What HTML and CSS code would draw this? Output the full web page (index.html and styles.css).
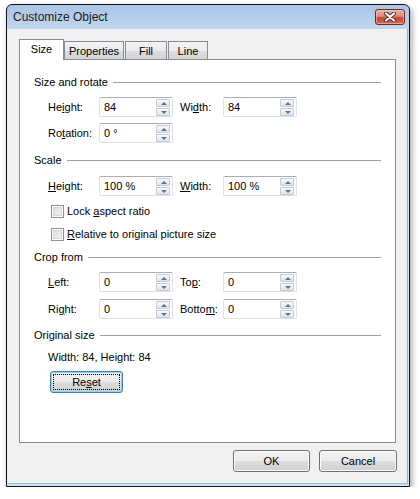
FILE: index.html
```html
<!DOCTYPE html>
<html>
<head>
<meta charset="utf-8">
<link rel="stylesheet" href="styles.css">
</head>
<body>
<div class="window">
  <div class="titlebar">
    <span class="title">Customize Object</span>
    <div class="close">
      <svg width="14" height="10" viewBox="0 0 14 10">
        <path d="M3 1.5 L11 8.5 M11 1.5 L3 8.5" stroke="#5a2a24" stroke-width="4" stroke-linecap="round"/>
        <path d="M3 1.5 L11 8.5 M11 1.5 L3 8.5" stroke="#ffffff" stroke-width="2.2" stroke-linecap="round"/>
      </svg>
    </div>
  </div>
  <div class="client">
    <div class="tabs">
      <div class="tab active t-size">Size</div>
      <div class="tab t-props">Properties</div>
      <div class="tab t-fill">Fill</div>
      <div class="tab t-line">Line</div>
    </div>
    <div class="panel">
      <div class="group g1"><span>Size and rotate</span><i class="rule"></i></div>
      <div class="row r-first">
        <span class="lbl">He<u>i</u>ght:</span>
        <div class="spin"><span class="val">84</span><div class="btns"><b class="up"></b><b class="dn"></b></div></div>
        <span class="lbl lbl2">Wi<u>d</u>th:</span>
        <div class="spin"><span class="val">84</span><div class="btns"><b class="up"></b><b class="dn"></b></div></div>
      </div>
      <div class="row r-next">
        <span class="lbl">Ro<u>t</u>ation:</span>
        <div class="spin"><span class="val">0 °</span><div class="btns"><b class="up"></b><b class="dn"></b></div></div>
      </div>

      <div class="group g2"><span>Scale</span><i class="rule"></i></div>
      <div class="row r-scale">
        <span class="lbl"><u>H</u>eight:</span>
        <div class="spin"><span class="val">100 %</span><div class="btns"><b class="up"></b><b class="dn"></b></div></div>
        <span class="lbl lbl2"><u>W</u>idth:</span>
        <div class="spin"><span class="val">100 %</span><div class="btns"><b class="up"></b><b class="dn"></b></div></div>
      </div>
      <div class="check c1"><span class="box"></span><span>Lock <u>a</u>spect ratio</span></div>
      <div class="check c2"><span class="box"></span><span><u>R</u>elative to original picture size</span></div>

      <div class="group g3"><span>Crop from</span><i class="rule"></i></div>
      <div class="row r-crop">
        <span class="lbl"><u>L</u>eft:</span>
        <div class="spin"><span class="val">0</span><div class="btns"><b class="up"></b><b class="dn"></b></div></div>
        <span class="lbl lbl2">To<u>p</u>:</span>
        <div class="spin"><span class="val">0</span><div class="btns"><b class="up"></b><b class="dn"></b></div></div>
      </div>
      <div class="row r-next2">
        <span class="lbl">Ri<u>g</u>ht:</span>
        <div class="spin"><span class="val">0</span><div class="btns"><b class="up"></b><b class="dn"></b></div></div>
        <span class="lbl lbl2">Botto<u>m</u>:</span>
        <div class="spin"><span class="val">0</span><div class="btns"><b class="up"></b><b class="dn"></b></div></div>
      </div>

      <div class="group g4"><span>Original size</span><i class="rule"></i></div>
      <div class="orig">Width: 84, Height: 84</div>
      <div class="reset-wrap"><div class="btn reset"><span class="focus">Re<u>s</u>et</span></div></div>
    </div>
    <div class="footer">
      <div class="btn ok">OK</div>
      <div class="btn cancel">Cancel</div>
    </div>
  </div>
</div>
</body>
</html>
```

FILE: styles.css
```css
html, body {
  margin: 0;
  padding: 0;
  background: #ffffff;
}
body {
  font-family: "Liberation Sans", Arial, sans-serif;
  font-size: 11px;
  color: #000;
}
u { text-decoration: underline; text-underline-offset: 1px; }

.window {
  box-sizing: border-box;
  margin: 4px 0 0 6px;
  width: 404px;
  height: 483px;
  border: 1px solid #151515;
  border-radius: 6px 6px 0 0;
  background: linear-gradient(#a9c4e6 0px, #c4d8ef 26px, #d7e6f5 60px, #cfe1f3 100%);
  box-shadow: 2px 3px 6px rgba(0,0,0,0.35);
  padding: 0 1px 2px 0;
  display: flex;
  flex-direction: column;
}
.titlebar {
  height: 24px;
  display: flex;
  align-items: flex-start;
  justify-content: space-between;
  padding: 0 3px 0 6px;
  flex: none;
}
.title {
  font-size: 12px;
  line-height: 24px;
  color: #1b1b1b;
}
.close {
  margin-top: 4px;
  width: 28px;
  height: 14px;
  border: 1px solid #6b2720;
  border-radius: 3px;
  background: linear-gradient(#e6b0a4 0%, #d98878 45%, #c54634 55%, #cf6a55 100%);
  box-shadow: inset 0 0 0 1px rgba(255,220,210,0.5);
  display: flex;
  align-items: center;
  justify-content: center;
}
.close svg { display: block; }

.client {
  flex: 1;
  background: #f0f0f0;
  border-left: 1px solid #e4edf7;
  border-right: 1px solid #6cc0ea;
  border-bottom: 1px solid #82c6ec;
  padding: 10px 11px 0 11px;
  display: flex;
  flex-direction: column;
}

.tabs {
  display: flex;
  align-items: flex-end;
  height: 21px;
  margin-bottom: -1px;
}
.tab {
  box-sizing: border-box;
  height: 19px;
  border: 1px solid #898c95;
  border-bottom: none;
  background: linear-gradient(#f3f3f3 0%, #ebebeb 50%, #dcdcdc 51%, #d2d2d2 100%);
  text-align: center;
  line-height: 18px;
  font-size: 11px;
}
.tab.active {
  height: 21px;
  background: #ffffff;
  position: relative;
  z-index: 1;
  line-height: 18px;
}
.t-size { width: 45px; margin-right: 0; }
.t-props { width: 60px; margin-left: 0; }
.t-fill { width: 42px; margin-left: 1px; }
.t-line { width: 40px; margin-left: 1px; }

.panel {
  box-sizing: border-box;
  width: 377px;
  height: 384px;
  border: 1px solid #898c95;
  background: #ffffff;
  padding: 0 14px 0 14px;
}

.group {
  display: flex;
  align-items: center;
  height: 16px;
}
.group .rule {
  flex: 1;
  height: 0;
  border-top: 1px solid #a0a0a0;
  margin-left: 5px;
}
.g1 { margin-top: 14px; }
.g2 { margin-top: 9px; }
.g3 { margin-top: 7px; }
.g4 { margin-top: 8px; }

.row {
  display: flex;
  align-items: center;
  height: 20px;
  padding-left: 14px;
}
.r-first { margin-top: 7px; }
.r-next { margin-top: 6px; }
.r-scale { margin-top: 8px; }
.r-crop { margin-top: 7px; }
.r-next2 { margin-top: 7px; }

.lbl { width: 51px; flex: none; }
.lbl2 { width: 43px; margin-left: 7px; }

.spin {
  box-sizing: border-box;
  width: 74px;
  height: 20px;
  border: 1px solid #dde2e8;
  border-top-color: #abadb3;
  border-radius: 2px;
  display: flex;
  align-items: center;
  justify-content: space-between;
  padding: 0 2px 0 4px;
}
.val { line-height: 18px; }
.btns {
  display: flex;
  flex-direction: column;
  gap: 1px;
}
.btns b {
  box-sizing: border-box;
  width: 14px;
  height: 8px;
  border: 1px solid #c4cbd4;
  border-radius: 1px;
  background: linear-gradient(#f9f9f9, #e1e4e8);
  position: relative;
}
.btns b::after {
  content: "";
  position: absolute;
  left: 4px;
  top: 2px;
  border-left: 3px solid transparent;
  border-right: 3px solid transparent;
}
.btns b.up::after { border-bottom: 3px solid #5673a8; }
.btns b.dn::after { border-top: 3px solid #5673a8; }

.check {
  display: flex;
  align-items: center;
  height: 16px;
  padding-left: 17px;
  gap: 3px;
}
.c1 { margin-top: 7px; }
.c2 { margin-top: 7px; }
.box {
  box-sizing: border-box;
  width: 13px;
  height: 13px;
  border: 1px solid #8e8f8f;
  background: #f4f4f4;
  box-shadow: inset 0 0 0 1px #ffffff, inset 0 0 0 2px #d6d6d6;
  background: linear-gradient(135deg, #d9d9d9, #f6f6f6);
}

.orig {
  margin-top: 6px;
  height: 16px;
  line-height: 16px;
  padding-left: 14px;
}
.reset-wrap {
  margin-top: 6px;
  padding-left: 16px;
}

.btn {
  box-sizing: border-box;
  height: 22px;
  border: 1px solid #707070;
  border-radius: 3px;
  background: linear-gradient(#f2f2f2 0%, #ebebeb 50%, #dddddd 51%, #cfcfcf 100%);
  box-shadow: inset 0 0 0 1px #fcfcfc;
  display: flex;
  align-items: center;
  justify-content: center;
  font-size: 11px;
}
.reset {
  width: 73px;
  border-color: #3c7fb1;
  box-shadow: inset 0 0 0 1px #8fd3f6;
  background: linear-gradient(#eaf6fd 0%, #d9f0fc 50%, #bee6fd 51%, #a7d9f5 100%);
  background: linear-gradient(#f2f2f2 0%, #ebebeb 50%, #dddddd 51%, #cfcfcf 100%);
  padding: 2px;
}
.reset .focus {
  flex: 1;
  align-self: stretch;
  border: 1px dotted #000;
  display: flex;
  align-items: center;
  justify-content: center;
}

.footer {
  display: flex;
  justify-content: flex-end;
  gap: 9px;
  margin-top: 7px;
  padding-right: 0;
  width: 378px;
}
.ok { width: 77px; }
.cancel { width: 78px; }
```
